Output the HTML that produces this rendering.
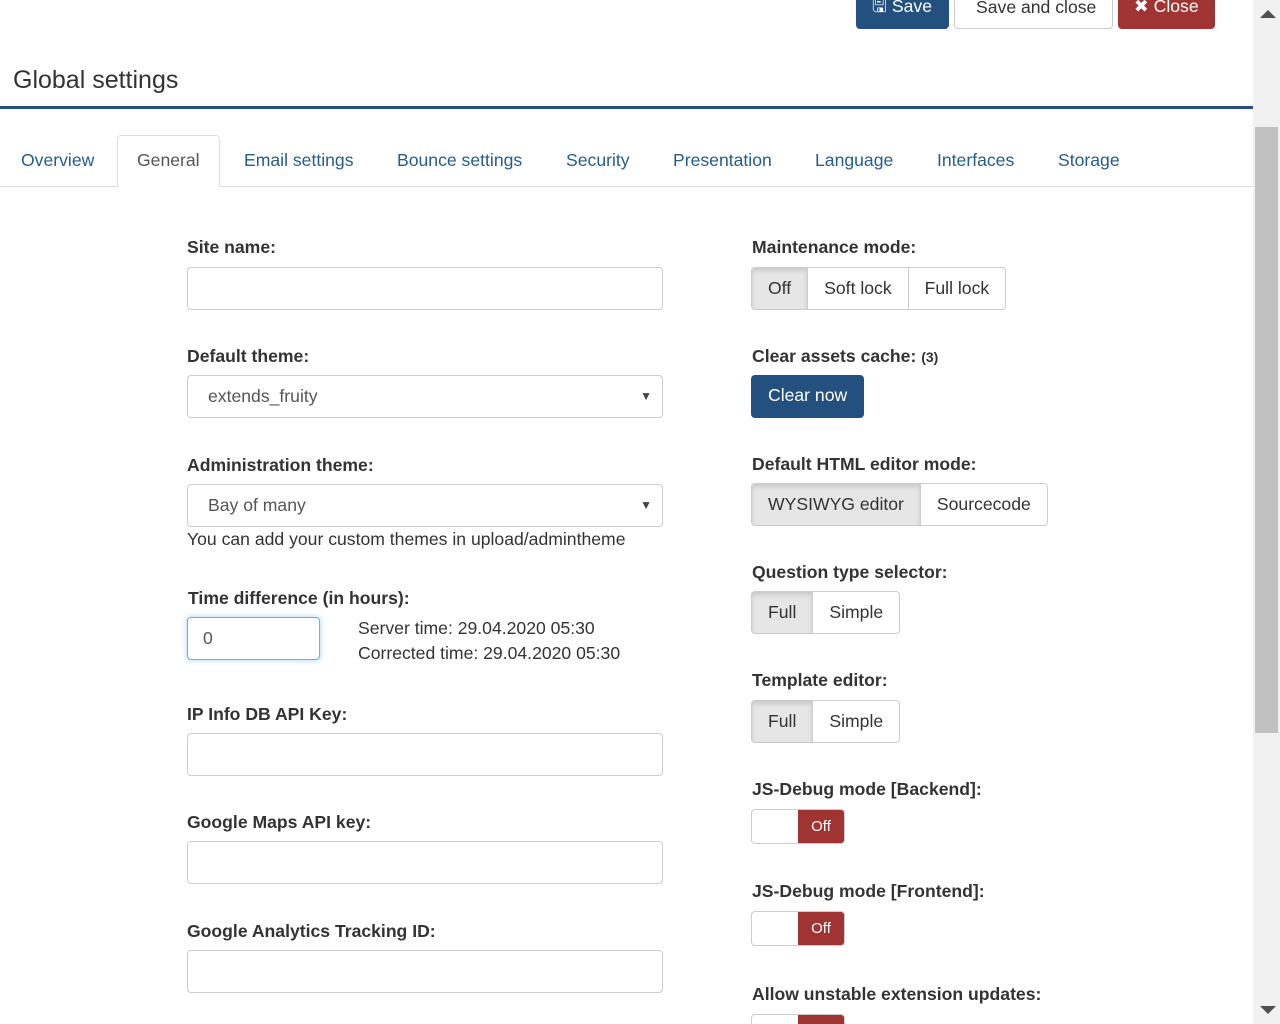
<!DOCTYPE html>
<html><head><meta charset="utf-8"><style>
*{box-sizing:border-box}
html,body{overflow:hidden}
body{margin:0;width:1280px;height:1024px;overflow:hidden;background:#fff;font-family:"Liberation Sans",sans-serif;color:#333;font-size:17.6px;position:relative}
.a{position:absolute}
.btn{position:absolute;border-radius:4px;font-size:17.6px;line-height:1;padding-top:0}
.lbl{position:absolute;font-weight:bold;font-size:17.6px;color:#333}
.inp{position:absolute;left:187px;width:476px;height:43px;border:1px solid #ccc;border-radius:4px;background:#fff}
.sel{color:#555;padding:10px 20px;font-size:17.6px}
.sel:after{content:"▼";position:absolute;right:10px;top:13px;font-size:12px;color:#444}
.grp{position:absolute;display:flex;height:43px;border:1px solid #ccc;border-radius:4px;overflow:hidden}
.grp div{padding:0 16px;line-height:41px;font-size:17.6px;color:#333;border-left:1px solid #ccc}
.grp div:first-child{border-left:none}
.grp .on{background:#e6e6e6;box-shadow:inset 0 3px 5px rgba(0,0,0,.125)}
.tog{position:absolute;left:751px;width:94px;height:35px;border:1px solid #ccc;border-radius:4px;overflow:hidden}
.tog span{position:absolute;right:0;top:0;width:46px;height:35px;background:#a03432;color:#fff;font-size:15px;text-align:center;line-height:33px}
.tab{position:absolute;top:150px;color:#245d8a;font-size:17.6px}
</style></head><body>
<div class="btn" style="left:856px;top:-6px;width:93px;height:35px;background:#245080;color:#fff;padding:4px 0 0 16px">🖫 Save</div>
<div class="btn" style="left:954px;top:-6px;width:159px;height:35px;border:1px solid #ccc;padding:4px 0 0 21px">Save and close</div>
<div class="btn" style="left:1118px;top:-6px;width:97px;height:35px;background:#a03432;color:#fff;padding:4px 0 0 16px">✖ Close</div>
<div class="a" style="left:13px;top:66px;font-size:25px;color:#333">Global settings</div>
<div class="a" style="left:0;top:106px;width:1253px;height:3px;background:#245080"></div>
<div class="a" style="left:0;top:186px;width:1253px;height:1px;background:#ddd"></div>
<div class="a" style="left:117px;top:135px;width:103px;height:52px;border:1px solid #ddd;border-bottom:none;border-radius:4px 4px 0 0;background:#fff"></div>
<div class="tab" style="left:21px">Overview</div>
<div class="tab" style="left:137px;color:#555">General</div>
<div class="tab" style="left:244px">Email settings</div>
<div class="tab" style="left:397px">Bounce settings</div>
<div class="tab" style="left:566px">Security</div>
<div class="tab" style="left:673px">Presentation</div>
<div class="tab" style="left:815px">Language</div>
<div class="tab" style="left:937px">Interfaces</div>
<div class="tab" style="left:1058px">Storage</div>

<div class="lbl" style="left:187px;top:237px">Site name:</div>
<div class="inp" style="top:267px"></div>
<div class="lbl" style="left:187px;top:346px">Default theme:</div>
<div class="inp sel" style="top:375px">extends_fruity</div>
<div class="lbl" style="left:187px;top:455px">Administration theme:</div>
<div class="inp sel" style="top:484px">Bay of many</div>
<div class="a" style="left:187px;top:529px">You can add your custom themes in upload/admintheme</div>
<div class="lbl" style="left:188px;top:588px">Time difference (in hours):</div>
<div class="inp" style="top:617px;width:133px;border-color:#66afe9;box-shadow:0 0 6px rgba(102,175,233,.6);padding:10px 15px;color:#555">0</div>
<div class="a" style="left:358px;top:616px;line-height:25px;color:#333">Server time: 29.04.2020 05:30<br>Corrected time: 29.04.2020 05:30</div>
<div class="lbl" style="left:187px;top:704px">IP Info DB API Key:</div>
<div class="inp" style="top:733px"></div>
<div class="lbl" style="left:187px;top:812px">Google Maps API key:</div>
<div class="inp" style="top:841px"></div>
<div class="lbl" style="left:187px;top:921px">Google Analytics Tracking ID:</div>
<div class="inp" style="top:950px"></div>

<div class="lbl" style="left:752px;top:237px">Maintenance mode:</div>
<div class="grp" style="left:751px;top:267px"><div class="on">Off</div><div>Soft lock</div><div>Full lock</div></div>
<div class="lbl" style="left:752px;top:346px">Clear assets cache: <span style="font-size:14px">(3)</span></div>
<div class="btn" style="left:751px;top:375px;width:113px;height:43px;background:#245080;color:#fff;padding:12px 0 0 17px">Clear now</div>
<div class="lbl" style="left:752px;top:454px">Default HTML editor mode:</div>
<div class="grp" style="left:751px;top:483px"><div class="on">WYSIWYG editor</div><div>Sourcecode</div></div>
<div class="lbl" style="left:752px;top:562px">Question type selector:</div>
<div class="grp" style="left:751px;top:591px"><div class="on">Full</div><div>Simple</div></div>
<div class="lbl" style="left:752px;top:670px">Template editor:</div>
<div class="grp" style="left:751px;top:700px"><div class="on">Full</div><div>Simple</div></div>
<div class="lbl" style="left:752px;top:779px">JS-Debug mode [Backend]:</div>
<div class="tog" style="top:809px"><span>Off</span></div>
<div class="lbl" style="left:752px;top:881px">JS-Debug mode [Frontend]:</div>
<div class="tog" style="top:911px"><span>Off</span></div>
<div class="lbl" style="left:752px;top:984px">Allow unstable extension updates:</div>
<div class="tog" style="top:1014px"><span>Off</span></div>

<div class="a" style="left:1253px;top:0;width:27px;height:1024px;background:#f1f1f1"></div>
<div class="a" style="left:1255px;top:127px;width:23px;height:606px;background:#c1c1c1"></div>
<div class="a" style="left:1260px;top:10px;width:0;height:0;border-left:8px solid transparent;border-right:8px solid transparent;border-bottom:8px solid #505050"></div>
<div class="a" style="left:1260px;top:1006px;width:0;height:0;border-left:8px solid transparent;border-right:8px solid transparent;border-top:8px solid #505050"></div>
</body></html>
